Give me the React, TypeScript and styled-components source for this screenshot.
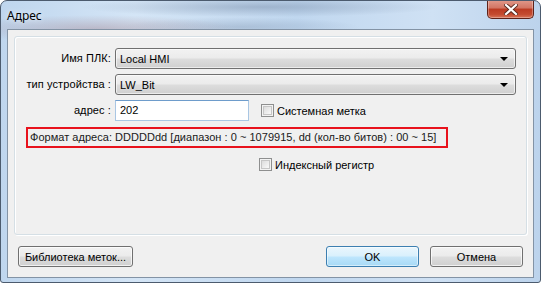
import React from "react";
import styled, { createGlobalStyle } from "styled-components";

const Global = createGlobalStyle`
  html, body { margin: 0; padding: 0; background: #fff; }
  body { font-family: "Liberation Sans", Arial, sans-serif; font-size: 11px; color: #000; }
  * { box-sizing: border-box; }
`;

const Window = styled.div`
  width: 541px;
  height: 283px;
  display: flex;
  flex-direction: column;
  border: 1px solid #4c5b6e;
  border-radius: 7px 7px 3px 3px;
  background:
    radial-gradient(ellipse 140px 14px at 95px 28px, rgba(150,110,120,0.35), transparent),
    radial-gradient(ellipse 180px 10px at 260px 6px, rgba(90,110,140,0.35), transparent),
    radial-gradient(ellipse 120px 10px at 240px 26px, rgba(90,110,140,0.25), transparent),
    linear-gradient(to right, #bfd6ee 0%, #d4e5f6 25%, #c0d7ef 55%, #cfe1f4 80%, #bcd3ec 100%);
  overflow: hidden;
`;

const TitleBar = styled.div`
  height: 28px;
  display: flex;
  justify-content: space-between;
  align-items: flex-start;
  flex-shrink: 0;
`;

const Title = styled.div`
  font-family: "Noto Sans", "Open Sans", sans-serif;
  font-size: 12px;
  color: #000;
  padding: 6px 0 0 6px;
  text-shadow: 0 0 6px rgba(255,255,255,0.9);
`;

const CloseButton = styled.div`
  width: 47px;
  height: 19px;
  margin-right: 6px;
  margin-top: -1px;
  border: 1px solid #5e2219;
  border-top: none;
  border-radius: 0 0 5px 5px;
  background: linear-gradient(#e19a8c 0%, #d27462 45%, #bb3a22 50%, #c44b30 80%, #d8755a 100%);
  box-shadow: inset 0 0 0 1px rgba(255,255,255,0.3);
  display: flex;
  align-items: center;
  justify-content: center;
`;

const Client = styled.div`
  flex: 1;
  margin: 0 6px 5px 6px;
  border: 1px solid #8393a5;
  background: #f0f0f0;
  display: flex;
  flex-direction: column;
  padding: 6px 6px 10px 6px;
`;

const GroupBox = styled.div`
  height: 199px;
  border: 1px solid #d5dfe5;
  border-radius: 3px;
  box-shadow: inset 1px 1px 0 #fff, 1px 1px 0 #fff;
  padding: 11px 10px 0 0;
  display: flex;
  flex-direction: column;
`;

const FormGrid = styled.div`
  display: grid;
  grid-template-columns: 96px 1fr;
  column-gap: 4px;
  row-gap: 5px;
  align-items: center;
`;

const Label = styled.div`
  text-align: right;
  white-space: nowrap;
  line-height: 21px;
  letter-spacing: 0.1px;
`;

const Combo = styled.div`
  height: 21px;
  border: 1px solid #707070;
  border-radius: 3px;
  background: linear-gradient(#f2f2f2 0%, #ebebeb 48%, #dddddd 52%, #cfcfcf 100%);
  box-shadow: inset 0 0 0 1px rgba(255,255,255,0.6);
  display: flex;
  align-items: center;
  justify-content: space-between;
  padding: 0 7px 0 4px;
`;

const Arrow = styled.div`
  width: 0;
  height: 0;
  border-left: 4px solid transparent;
  border-right: 4px solid transparent;
  border-top: 4px solid #000;
`;

const AddressRow = styled.div`
  display: flex;
  align-items: center;
  gap: 12px;
`;

const TextBox = styled.div`
  width: 134px;
  height: 21px;
  border: 1px solid #a9c6e3;
  border-top-color: #6e9ccb;
  background: #fff;
  padding: 0 0 0 4px;
  line-height: 19px;
`;

const CheckRow = styled.label`
  display: flex;
  align-items: center;
  gap: 3px;
`;

const CheckBox = styled.span`
  width: 13px;
  height: 13px;
  border: 1px solid #8e8f8f;
  background: linear-gradient(135deg, #d4d4d4 0%, #f4f4f4 70%, #fbfbfb 100%);
  box-shadow: inset 0 0 0 1px #f3f3f3, inset 0 0 0 2px #c6c6c6;
  flex-shrink: 0;
`;

const FormatBox = styled.div`
  margin: 6px 0 0 11px;
  width: 422px;
  height: 21px;
  border: 2px solid #e8121c;
  padding: 0 0 0 2px;
  line-height: 17px;
  color: #1a1a1a;
  white-space: nowrap;
  letter-spacing: 0.03px;
`;

const IndexRow = styled.div`
  margin-top: 10px;
  padding-left: 244px;
`;

const ButtonRow = styled.div`
  margin-top: 11px;
  display: flex;
  align-items: center;
  padding: 0 4px 0 4px;
`;

const Spacer = styled.div`
  flex: 1;
`;

const Button = styled.div<{ $w: number; $default?: boolean }>`
  width: ${(p) => p.$w}px;
  height: 21px;
  border: 1px solid ${(p) => (p.$default ? "#3c7fb1" : "#707070")};
  border-radius: 3px;
  background: ${(p) =>
    p.$default
      ? "linear-gradient(#eaf6fd 0%, #d9f0fc 48%, #bee6fd 52%, #a7d9f5 100%)"
      : "linear-gradient(#f2f2f2 0%, #ebebeb 48%, #dddddd 52%, #cfcfcf 100%)"};
  box-shadow: inset 0 0 0 1px ${(p) => (p.$default ? "rgba(255,255,255,0.5)" : "rgba(255,255,255,0.7)")};
  display: flex;
  align-items: center;
  justify-content: center;
  white-space: nowrap;
  & + & {
    margin-left: 11px;
  }
`;

export default function App() {
  return (
    <>
      <Global />
      <Window>
        <TitleBar>
          <Title>Адрес</Title>
          <CloseButton>
            <svg width="14" height="11" viewBox="0 0 14 11">
              <path
                d="M2 1 L12 10 M12 1 L2 10"
                stroke="#5a2a20"
                strokeWidth="4"
                strokeLinecap="square"
              />
              <path
                d="M2 1 L12 10 M12 1 L2 10"
                stroke="#ffffff"
                strokeWidth="2.2"
                strokeLinecap="square"
              />
            </svg>
          </CloseButton>
        </TitleBar>
        <Client>
          <GroupBox>
            <FormGrid>
              <Label>Имя ПЛК:</Label>
              <Combo>
                <span>Local HMI</span>
                <Arrow />
              </Combo>
              <Label>тип устройства :</Label>
              <Combo>
                <span>LW_Bit</span>
                <Arrow />
              </Combo>
              <Label>адрес :</Label>
              <AddressRow>
                <TextBox>202</TextBox>
                <CheckRow>
                  <CheckBox />
                  <span>Системная метка</span>
                </CheckRow>
              </AddressRow>
            </FormGrid>
            <FormatBox>
              Формат адреса: DDDDDdd [диапазон : 0 ~ 1079915, dd (кол-во битов) : 00 ~ 15]
            </FormatBox>
            <IndexRow>
              <CheckRow>
                <CheckBox />
                <span>Индексный регистр</span>
              </CheckRow>
            </IndexRow>
          </GroupBox>
          <ButtonRow>
            <Button $w={115}>Библиотека меток...</Button>
            <Spacer />
            <Button $w={93} $default>
              OK
            </Button>
            <Button $w={93}>Отмена</Button>
          </ButtonRow>
        </Client>
      </Window>
    </>
  );
}
